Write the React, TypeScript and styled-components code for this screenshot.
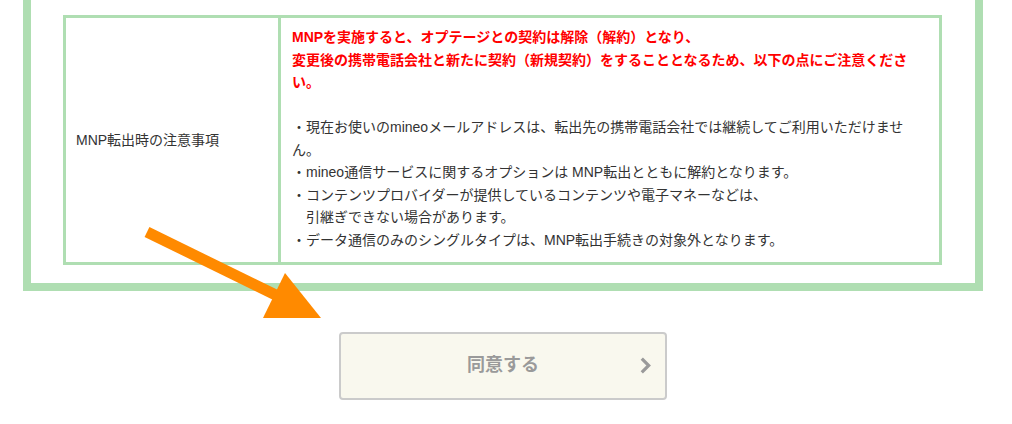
import React from 'react';
import styled, { createGlobalStyle } from 'styled-components';

const GlobalStyle = createGlobalStyle`
  html, body {
    margin: 0;
    padding: 0;
    background: #fff;
  }

  body {
    font-family: 'Liberation Sans', 'Noto Sans CJK JP', sans-serif;
    color: #333;
  }
`;

const GREEN = '#afdeb2';

const NOTES = [
  '・現在お使いのmineoメールアドレスは、転出先の携帯電話会社では継続してご利用いただけません。',
  '・mineo通信サービスに関するオプションは MNP転出とともに解約となります。',
  '・コンテンツプロバイダーが提供しているコンテンツや電子マネーなどは、',
  '　引継ぎできない場合があります。',
  '・データ通信のみのシングルタイプは、MNP転出手続きの対象外となります。'
];

const App: React.FC = () => {
  return (
    <Page>
      <GlobalStyle />
      <Frame>
        <NoticeTable>
          <LabelCell>MNP転出時の注意事項</LabelCell>
          <BodyCell>
            <Warning>
              MNPを実施すると、オプテージとの契約は解除（解約）となり、
              <br />
              変更後の携帯電話会社と新たに契約（新規契約）をすることとなるため、以下の点にご注意ください。
            </Warning>
            {NOTES.map((note) => (
              <NoteLine key={note}>{note}</NoteLine>
            ))}
          </BodyCell>
        </NoticeTable>
      </Frame>
      <Actions>
        <AgreeButton type="button">
          同意する
          <Chevron viewBox="0 0 10 16" aria-hidden="true">
            <path d="M1.5 1.5 L8 8 L1.5 14.5" />
          </Chevron>
        </AgreeButton>
      </Actions>
      {/* annotation arrow drawn over the page */}
      <Arrow viewBox="0 0 1012 424" aria-hidden="true">
        <line x1="147" y1="232" x2="290" y2="302" />
        <polygon points="285,273 263,318 321,318" />
      </Arrow>
    </Page>
  );
};

export default App;

const Page = styled.div`
  position: relative;
  width: 960px;
  height: 424px;
  padding-left: 23px;
`;

const Frame = styled.section`
  border: 8px solid ${GREEN};
  border-top: 0;
  padding: 15px 33px 18px 32px;
`;

const NoticeTable = styled.div`
  display: grid;
  grid-template-columns: 215px 1fr;
  border: 3px solid ${GREEN};
  font-size: 14px;
  line-height: 22.5px;
`;

const LabelCell = styled.div`
  display: flex;
  align-items: center;
  padding: 0 10px;
  border-right: 3px solid ${GREEN};
  padding-top: 1px;
`;

const BodyCell = styled.div`
  padding: 8px 20px 11px 11px;
`;

const Warning = styled.p`
  margin: 0 0 22.5px;
  color: #ff0000;
  font-weight: bold;
`;

const NoteLine = styled.p`
  margin: 0;
  white-space: pre-wrap;
`;

const Actions = styled.div`
  display: flex;
  justify-content: center;
  padding-top: 41px;
`;

const AgreeButton = styled.button`
  position: relative;
  display: flex;
  align-items: center;
  justify-content: center;
  width: 328px;
  height: 68px;
  padding: 0 0 6px;
  border: 2px solid #cbcbcb;
  border-radius: 4px;
  background: #f9f8ee;
  color: #9a9a9a;
  font-family: 'Noto Sans CJK JP', sans-serif;
  font-size: 18px;
  line-height: 1;
  font-weight: bold;
  cursor: pointer;
`;

const Chevron = styled.svg`
  position: absolute;
  right: 14px;
  top: 23px;
  width: 11px;
  height: 17px;
  fill: none;
  stroke: #9a9a9a;
  stroke-width: 3;
`;

const Arrow = styled.svg`
  position: absolute;
  left: 0;
  top: 0;
  width: 1012px;
  height: 424px;
  pointer-events: none;

  line {
    stroke: #ff8a00;
    stroke-width: 11;
  }

  polygon {
    fill: #ff8a00;
  }
`;
